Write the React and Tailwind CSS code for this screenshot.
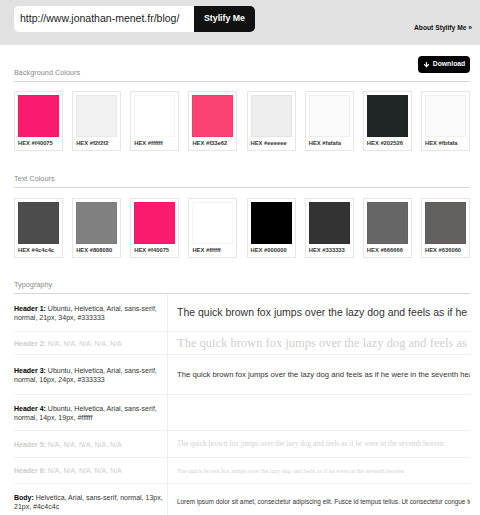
import React from 'react';
import { ArrowDown } from 'lucide-react';

// hex label, displayed colour
const bgColours = [
  ['#f40075', '#fb1b6e'], ['#f2f2f2', '#f2f2f2'], ['#ffffff', '#ffffff'], ['#f33e62', '#fa4273'],
  ['#eeeeee', '#eeeeee'], ['#fafafa', '#fafafa'], ['#202526', '#202526'], ['#fbfafa', '#fbfafa'],
];
const textColours = [
  ['#4c4c4c', '#4c4c4c'], ['#808080', '#808080'], ['#f40075', '#fb1b6e'], ['#ffffff', '#ffffff'],
  ['#000000', '#000000'], ['#333333', '#333333'], ['#666666', '#666666'], ['#636060', '#636060'],
];

const fox = 'The quick brown fox jumps over the lazy dog and feels as if he were in the seventh heaven';
const lorem = 'Lorem ipsum dolor sit amet, consectetur adipiscing elit. Fusce id tempus tellus. Ut consectetur congue tellus, vel posuere nisi.';

const rows = [
  { label: 'Header 1:', desc: 'Ubuntu, Helvetica, Arial, sans-serif, normal, 21px, 34px, #333333', h: 'h-[38px]', sample: fox, cls: "text-[10.5px] text-[#333] font-['Liberation_Sans',Arial,sans-serif]" },
  { label: 'Header 2:', desc: 'N/A, N/A, N/A, N/A, N/A', na: true, h: 'h-[23px]', sample: fox, cls: "text-[12.5px] text-[#cfcfcf] font-['Liberation_Serif',Georgia,serif]" },
  { label: 'Header 3:', desc: 'Ubuntu, Helvetica, Arial, sans-serif, normal, 16px, 24px, #333333', h: 'h-[40px]', sample: fox, cls: "text-[7.7px] text-[#333] font-['Liberation_Sans',Arial,sans-serif]" },
  { label: 'Header 4:', desc: 'Ubuntu, Helvetica, Arial, sans-serif, normal, 14px, 19px, #ffffff', h: 'h-[36px]', sample: fox, cls: "text-[6.5px] text-white font-['Liberation_Sans',Arial,sans-serif]" },
  { label: 'Header 5:', desc: 'N/A, N/A, N/A, N/A, N/A', na: true, h: 'h-[27px]', sample: fox, cls: "text-[7.35px] text-[#d2d2d2] font-['Liberation_Serif',Georgia,serif]" },
  { label: 'Header 6:', desc: 'N/A, N/A, N/A, N/A, N/A', na: true, h: 'h-[26px]', sample: fox, cls: "text-[6.25px] text-[#d2d2d2] font-['Liberation_Serif',Georgia,serif]" },
  { label: 'Body:', desc: 'Helvetica, Arial, sans-serif, normal, 13px, 21px, #4c4c4c', h: 'h-[36px]', sample: lorem, cls: "text-[6.4px] text-[#333] font-['Liberation_Sans',Arial,sans-serif]" },
];

const SectionTitle = ({ title, children, className = '' }) => (
  <div className={`flex items-end justify-between border-b border-[#d6d6d6] pb-[4px] ${className}`}>
    <span className="text-[7.3px] leading-[8px] text-[#8a8a8a]">{title}</span>
    {children}
  </div>
);

const Swatches = ({ colours, className = '' }) => (
  <div className={`flex justify-between ${className}`}>
    {colours.map(([hex, shown], i) => (
      <div key={i} className="w-[49px] h-[60px] border border-[#e6e6e6] bg-white p-[3px]">
        <div className="h-[42px] w-full border border-black/[0.04]" style={{ backgroundColor: shown }} />
        <div className="mt-[3px] text-[5.8px] leading-[7px] font-bold text-[#333] whitespace-nowrap">HEX {hex}</div>
      </div>
    ))}
  </div>
);

export default function App() {
  return (
    <div className="w-[480px] h-[515px] overflow-hidden bg-white font-['Liberation_Sans',Arial,sans-serif]">
      {/* Top bar */}
      <div className="h-[45px] bg-[#e1e1e1] flex items-start pl-[14px] pr-[8px] pt-[6px]">
        <div className="flex h-[26px]">
          <div className="w-[180px] bg-white rounded-l-[5px] pl-[6px] flex items-center text-[10.5px] text-[#222]">
            http://www.jonathan-menet.fr/blog/
          </div>
          <button className="w-[61px] bg-[#111] rounded-r-[5px] text-white text-[8.8px] font-bold">Stylify Me</button>
        </div>
        <a className="ml-auto mt-[18px] text-[6.7px] leading-[8px] font-bold text-[#111]">About Stylify Me »</a>
      </div>

      <div className="pl-[14px] pr-[10px]">
        <SectionTitle title="Background Colours" className="mt-[11px]">
          <button className="mb-[4px] h-[17px] w-[52px] bg-black rounded-[4px] text-white text-[6.8px] font-bold flex items-center justify-center gap-[3px]">
            <ArrowDown size={7} strokeWidth={4} />
            Download
          </button>
        </SectionTitle>
        <Swatches colours={bgColours} className="mt-[9px]" />

        <SectionTitle title="Text Colours" className="mt-[24px]" />
        <Swatches colours={textColours} className="mt-[10px]" />

        <SectionTitle title="Typography" className="mt-[23px]" />
        <div>
          {rows.map((r, i) => (
            <div key={i} className={`flex border-b border-[#efefef] ${r.h}`}>
              <div className={`w-[154px] shrink-0 border-r border-[#efefef] pr-[4px] flex items-center text-[7px] leading-[9px] ${r.na ? 'text-[#cccccc]' : 'text-[#333]'}`}>
                <p>
                  <span className={`font-bold ${r.na ? '' : 'text-black'}`}>{r.label}</span> {r.desc}
                </p>
              </div>
              <div className={`flex-1 min-w-0 pl-[9px] flex items-center overflow-hidden whitespace-nowrap ${r.cls}`}>
                {r.sample}
              </div>
            </div>
          ))}
        </div>
      </div>
    </div>
  );
}
